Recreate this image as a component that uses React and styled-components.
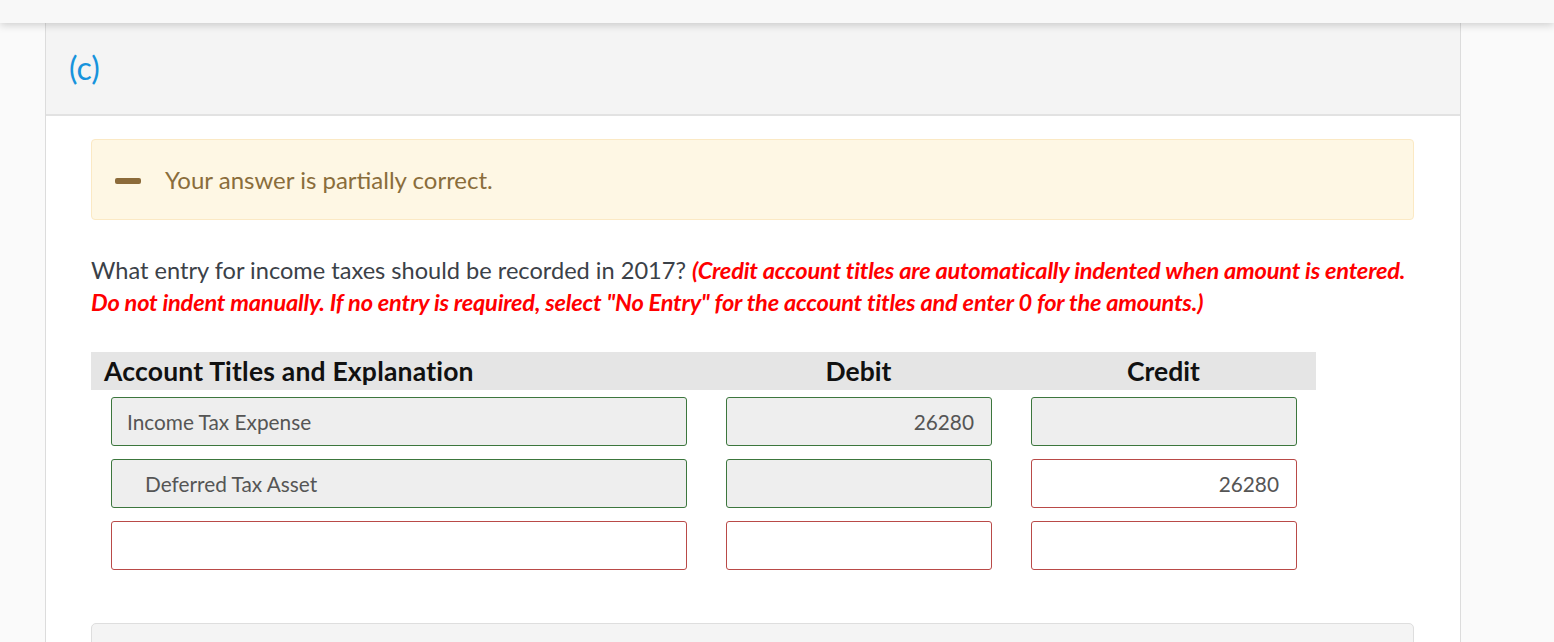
import React from "react";
import styled, { createGlobalStyle } from "styled-components";

const Global = createGlobalStyle`
  html, body { margin: 0; padding: 0; }
  body {
    background: #fafafa;
    font-family: Lato, "Open Sans", "Liberation Sans", sans-serif;
    overflow: hidden;
  }
  * { box-sizing: border-box; }
`;

const Page = styled.div`
  width: 1554px;
  height: 642px;
  background: #fafafa;
  position: relative;
  overflow: hidden;
`;

const TopBar = styled.div`
  height: 23px;
  background: #f8f8f8;
  box-shadow: 0 2px 8px rgba(0, 0, 0, 0.18);
  position: relative;
  z-index: 2;
`;

const Body = styled.div`
  display: flex;
  padding-left: 45px;
`;

const Panel = styled.div`
  width: 1416px;
  border-left: 1px solid #dcdcdc;
  border-right: 1px solid #dcdcdc;
  background: #fff;
`;

const PanelHeader = styled.div`
  height: 93px;
  background: #f4f4f4;
  border-bottom: 2px solid #e2e2e2;
  padding: 26px 0 0 23px;
  color: #1793dc;
  font-size: 32px;
  line-height: 38px;
`;

const PanelContent = styled.div`
  padding: 23px 46px 0 45px;
`;

const Alert = styled.div`
  height: 81px;
  background: #fef7e4;
  border: 1px solid #fbe9c4;
  border-radius: 4px;
  display: flex;
  align-items: center;
  padding-left: 23px;
  gap: 24px;
  color: #8a6d3b;
  font-size: 24px;
`;

const Minus = styled.span`
  display: inline-block;
  width: 26px;
  height: 6px;
  border-radius: 2px;
  background: #8c6b3a;
  margin-top: 2px;
`;

const Question = styled.p`
  margin: 34px 0 0 0;
  font-size: 23.6px;
  line-height: 32px;
  color: #3b4148;
`;

const Note = styled.span`
  color: #ff0000;
  font-weight: 700;
  font-style: italic;
  letter-spacing: -0.2px;
`;

const Table = styled.div`
  width: 1225px;
  margin-top: 34px;
`;

const Grid = styled.div`
  display: grid;
  grid-template-columns: 615px 305px 305px;
`;

const HeadRow = styled(Grid)`
  height: 38px;
  background: #e5e5e5;
  align-items: center;
  font-weight: 700;
  font-size: 26.5px;
  color: #111;
`;

const HeadCell = styled.div`
  text-align: ${(p) => (p.$center ? "center" : "left")};
  padding-left: ${(p) => (p.$center ? "0" : "13px")};
  letter-spacing: ${(p) => (p.$center ? "0" : "0.2px")};
`;

const Row = styled(Grid)`
  margin-top: ${(p) => (p.$first ? "7px" : "13px")};
`;

const Cell = styled.div`
  padding: 0 19px 0 20px;
`;

const Field = styled.div`
  height: 49px;
  border: 1px solid ${(p) => (p.$ok ? "#3c763d" : "#b94a48")};
  border-radius: 3px;
  background: ${(p) => (p.$ok ? "#eeeeee" : "#ffffff")};
  display: flex;
  align-items: center;
  justify-content: ${(p) => (p.$num ? "flex-end" : "flex-start")};
  padding: 0 17px 0 ${(p) => (p.$indent ? "33px" : "15px")};
  font-size: 20.8px;
  color: #555;
`;

const BottomBox = styled.div`
  margin-top: 53px;
  height: 40px;
  background: #f4f4f4;
  border: 1px solid #dedede;
  border-radius: 5px;
`;

const rows = [
  { acct: { text: "Income Tax Expense", ok: true }, debit: { text: "26280", ok: true }, credit: { text: "", ok: true } },
  { acct: { text: "Deferred Tax Asset", ok: true, indent: true }, debit: { text: "", ok: true }, credit: { text: "26280", ok: false } },
  { acct: { text: "", ok: false }, debit: { text: "", ok: false }, credit: { text: "", ok: false } },
];

export default function App() {
  return (
    <Page>
      <Global />
      <TopBar />
      <Body>
        <Panel>
          <PanelHeader>(c)</PanelHeader>
          <PanelContent>
            <Alert>
              <Minus />
              <span>Your answer is partially correct.</span>
            </Alert>
            <Question>
              What entry for income taxes should be recorded in 2017?{" "}
              <Note>
                (Credit account titles are automatically indented when amount is entered. Do not indent manually. If no
                entry is required, select "No Entry" for the account titles and enter 0 for the amounts.)
              </Note>
            </Question>
            <Table>
              <HeadRow>
                <HeadCell>Account Titles and Explanation</HeadCell>
                <HeadCell $center>Debit</HeadCell>
                <HeadCell $center>Credit</HeadCell>
              </HeadRow>
              {rows.map((r, i) => (
                <Row key={i} $first={i === 0}>
                  <Cell>
                    <Field $ok={r.acct.ok} $indent={r.acct.indent}>{r.acct.text}</Field>
                  </Cell>
                  <Cell>
                    <Field $ok={r.debit.ok} $num>{r.debit.text}</Field>
                  </Cell>
                  <Cell>
                    <Field $ok={r.credit.ok} $num>{r.credit.text}</Field>
                  </Cell>
                </Row>
              ))}
            </Table>
            <BottomBox />
          </PanelContent>
        </Panel>
      </Body>
    </Page>
  );
}
